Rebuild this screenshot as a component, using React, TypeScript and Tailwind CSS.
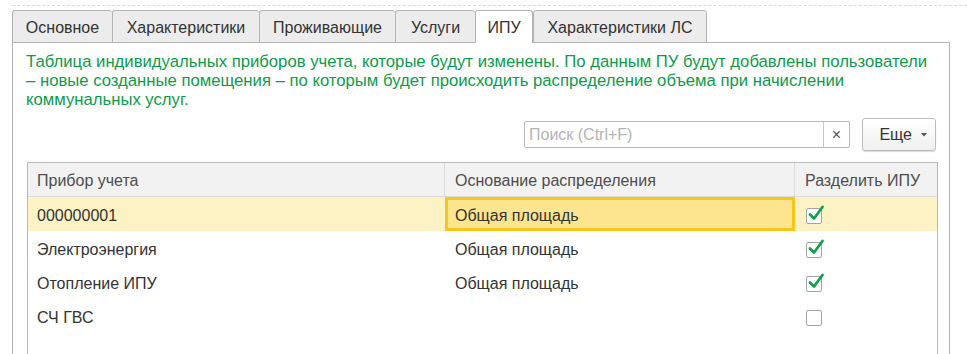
import React from "react";

const tabs = [
  { label: "Основное", w: "w-[100px]" },
  { label: "Характеристики", w: "w-[147px]" },
  { label: "Проживающие", w: "w-[136px]" },
  { label: "Услуги", w: "w-[80px]" },
  { label: "ИПУ", w: "w-[58px]", active: true },
  { label: "Характеристики ЛС", w: "w-[174px]" },
];

const rows = [
  { name: "000000001", basis: "Общая площадь", checked: true, selected: true },
  { name: "Электроэнергия", basis: "Общая площадь", checked: true },
  { name: "Отопление ИПУ", basis: "Общая площадь", checked: true },
  { name: "СЧ ГВС", basis: "", checked: false },
];

function Check({ checked }: { checked: boolean }) {
  return (
    <div className="relative w-[16px] h-[16px] rounded-[2px] border border-[#a3a3a3] bg-white">
      {checked && (
        <svg className="absolute left-[1px] top-[-4px]" width="17" height="17" viewBox="0 0 17 17">
          <path d="M2 9.5 L6 13.5 L14.5 2" fill="none" stroke="#12a04c" strokeWidth="2.8" strokeLinecap="round" strokeLinejoin="round" />
        </svg>
      )}
    </div>
  );
}

export default function App() {
  return (
    <div
      className="w-[967px] h-[354px] bg-white overflow-hidden text-[16px] text-[#333333]"
      style={{ fontFamily: '"Liberation Sans", Arial, sans-serif' }}
    >
      <div className="pt-[5px] pl-[12px]">
        <div className="border-t border-dashed border-[#d9d9d9]" />
      </div>
      <div className="flex pl-[12px] pt-[4px] relative z-10">
        {tabs.map((t, i) => (
          <div
            key={t.label}
            className={`${t.w} h-[33px] pt-[2px] flex items-center justify-center border-t border-l ${
              i === tabs.length - 1 ? "border-r" : ""
            } border-[#b4b4b4] rounded-t-[3px] ${
              t.active ? "bg-white border-r border-r-[#b4b4b4]" : "bg-[#ececec] border-b"
            } text-[#333333] whitespace-nowrap`}
          >
            {t.label}
          </div>
        ))}
      </div>
      <div className="ml-[12px] w-[938px] h-[320px] -mt-[1px] border border-[#b4b4b4] border-b-0">
        <div className="pl-[13px] pr-[2px] pt-[9px] text-[16.7px] text-[#0c9b4b] leading-[19px] whitespace-nowrap">
          Таблица индивидуальных приборов учета, которые будут изменены. По данным ПУ будут добавлены пользователи
          <br />– новые созданные помещения – по которым будет происходить распределение объема при начислении
          <br />
          коммунальных услуг.
        </div>
        <div className="flex justify-end items-center pr-[13px] mt-[9px]">
          <div className="flex w-[326px] h-[27px] border border-[#b9b9b9] rounded-[2px] bg-white">
            <div className="flex-1 flex items-center pl-[4px] pt-[1px] text-[#b3b3b3]">Поиск (Ctrl+F)</div>
            <div className="w-[26px] border-l border-[#c8c8c8] flex items-center justify-center text-[#555] text-[16px]">
              ×
            </div>
          </div>
          <div className="ml-[12px] w-[74px] h-[33px] border border-[#bdbdbd] rounded-[3px] bg-gradient-to-b from-white to-[#f0f0f0] shadow-[0_1px_1px_rgba(0,0,0,0.15)] flex items-center justify-end pr-[8px] pt-[1px]">
            <span className="text-[#333]">Еще</span>
            <svg className="ml-[9px]" width="6" height="4" viewBox="0 0 6 4">
              <path d="M0 0 L6 0 L3 3.5 Z" fill="#555" />
            </svg>
          </div>
        </div>
        <div className="ml-[14px] mt-[11px] w-[911px] border border-[#b9b9b9] border-b-0 h-[200px]">
          <div className="flex h-[34px] bg-[#f2f2f2] border-b border-[#dadada] text-[#4d4d4d]">
            <div className="w-[417px] flex items-center pl-[9px] pt-[2px] border-r border-[#dcdcdc]">Прибор учета</div>
            <div className="w-[350px] flex items-center pl-[10px] pt-[2px] border-r border-[#dcdcdc]">Основание распределения</div>
            <div className="flex-1 flex items-center pl-[10px] pt-[2px]">Разделить ИПУ</div>
          </div>
          {rows.map((r) => (
            <div key={r.name} className={`flex h-[34px] ${r.selected ? "bg-[#fdf2c4]" : ""}`}>
              <div className="w-[417px] flex items-center pl-[9px] pt-[3px]">{r.name}</div>
              <div
                className={`w-[350px] flex items-center pt-[3px] ${
                  r.selected ? "pl-[7px] bg-[#fde48e] border-[3px] border-[#f7c51c]" : "pl-[10px]"
                }`}
              >
                {r.basis}
              </div>
              <div className="flex-1 flex items-center pl-[11px] pt-[3px]">
                <Check checked={r.checked} />
              </div>
            </div>
          ))}
        </div>
      </div>
    </div>
  );
}
